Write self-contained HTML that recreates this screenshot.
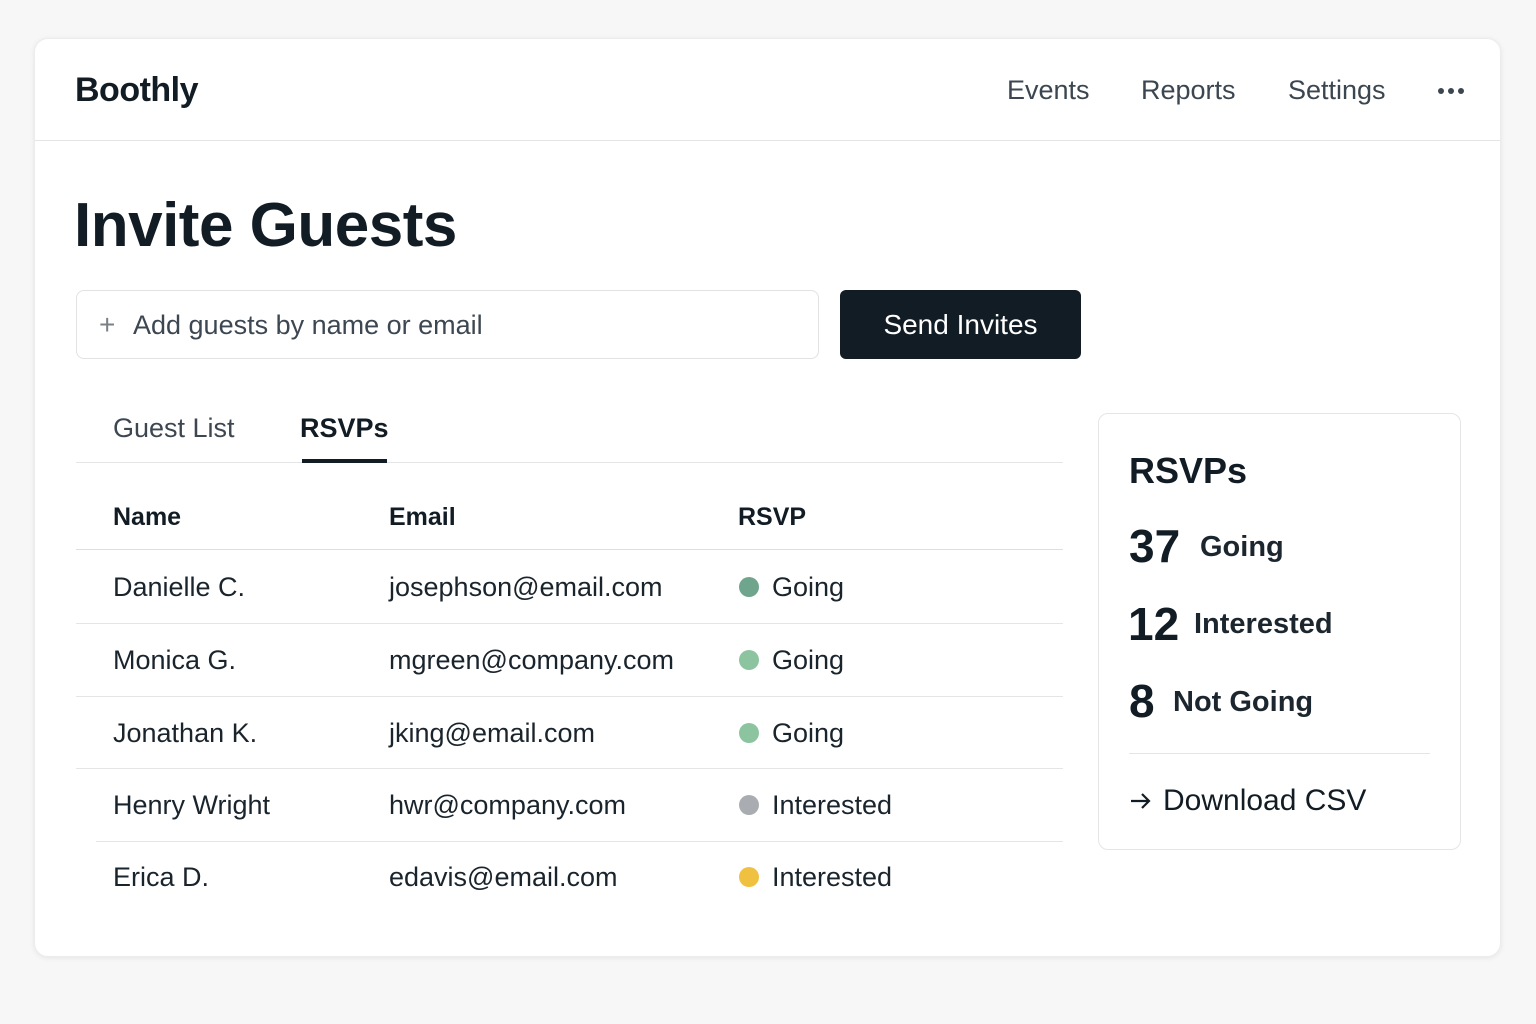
<!DOCTYPE html>
<html><head><meta charset="utf-8"><style>
*{margin:0;padding:0;box-sizing:border-box}
body{width:1536px;height:1024px;background:#f7f7f7;font-family:"Liberation Sans",sans-serif;color:#121c24;position:relative;overflow:hidden}
.card{position:absolute;left:34px;top:38px;width:1467px;height:919px;background:#fff;border-radius:14px;box-shadow:0 1px 6px rgba(0,0,0,.08);border:1px solid #ececec}
.a{position:absolute;white-space:nowrap}
.hr{position:absolute;height:1px;background:#e3e5e7}
.dot{position:absolute;width:20px;height:20px;border-radius:50%}
.t{font-size:27px;color:#1a242c}
.md{position:absolute;top:88px;width:6px;height:6px;border-radius:50%;background:#3b4650}
</style></head><body>
<div class="card"></div>
<div class="a" style="left:75px;top:71px;font-size:34px;font-weight:bold;letter-spacing:-0.5px">Boothly</div>
<div class="a" style="left:1007px;top:75px;font-size:27px;color:#3b4650">Events</div>
<div class="a" style="left:1141px;top:75px;font-size:27px;color:#3b4650">Reports</div>
<div class="a" style="left:1288px;top:75px;font-size:27px;color:#3b4650">Settings</div>
<div class="md" style="left:1438px"></div><div class="md" style="left:1448px"></div><div class="md" style="left:1458px"></div>
<div class="hr" style="left:35px;top:140px;width:1465px"></div>
<div class="a" style="left:74px;top:190px;font-size:62px;font-weight:bold;letter-spacing:-0.5px">Invite Guests</div>
<div class="a" style="left:76px;top:290px;width:743px;height:69px;border:1px solid #e0e2e4;border-radius:8px"></div>
<div class="a" style="left:99px;top:309px;font-size:28px;color:#7a8088">+</div>
<div class="a" style="left:133px;top:310px;font-size:27px;color:#3d4752">Add guests by name or email</div>
<div class="a" style="left:840px;top:290px;width:241px;height:69px;background:#111c24;border-radius:6px;color:#fff;font-size:28px;text-align:center;line-height:69px">Send Invites</div>
<div class="a" style="left:113px;top:413px;font-size:27px;color:#3d4752">Guest List</div>
<div class="a" style="left:300px;top:413px;font-size:27px;font-weight:bold">RSVPs</div>
<div class="hr" style="left:76px;top:462px;width:987px"></div>
<div class="a" style="left:302px;top:459px;width:85px;height:4px;background:#121c24"></div>
<div class="a" style="left:113px;top:503px;font-size:25px;font-weight:bold">Name</div>
<div class="a" style="left:389px;top:503px;font-size:25px;font-weight:bold">Email</div>
<div class="a" style="left:738px;top:503px;font-size:25px;font-weight:bold">RSVP</div>
<div class="hr" style="left:76px;top:549px;width:987px;background:#dcdfe2"></div>
<div class="a t" style="left:113px;top:572px">Danielle C.</div><div class="a t" style="left:389px;top:572px">josephson@email.com</div><div class="dot" style="left:739px;top:577px;background:#6fa58c"></div><div class="a t" style="left:772px;top:572px">Going</div>
<div class="hr" style="left:76px;top:623px;width:987px"></div>
<div class="a t" style="left:113px;top:645px">Monica G.</div><div class="a t" style="left:389px;top:645px">mgreen@company.com</div><div class="dot" style="left:739px;top:650px;background:#8cc4a0"></div><div class="a t" style="left:772px;top:645px">Going</div>
<div class="hr" style="left:76px;top:696px;width:987px"></div>
<div class="a t" style="left:113px;top:718px">Jonathan K.</div><div class="a t" style="left:389px;top:718px">jking@email.com</div><div class="dot" style="left:739px;top:723px;background:#8cc4a0"></div><div class="a t" style="left:772px;top:718px">Going</div>
<div class="hr" style="left:76px;top:768px;width:987px"></div>
<div class="a t" style="left:113px;top:790px">Henry Wright</div><div class="a t" style="left:389px;top:790px">hwr@company.com</div><div class="dot" style="left:739px;top:795px;background:#a9adb2"></div><div class="a t" style="left:772px;top:790px">Interested</div>
<div class="hr" style="left:96px;top:841px;width:967px"></div>
<div class="a t" style="left:113px;top:862px">Erica D.</div><div class="a t" style="left:389px;top:862px">edavis@email.com</div><div class="dot" style="left:739px;top:867px;background:#f0c040"></div><div class="a t" style="left:772px;top:862px">Interested</div>
<div class="a" style="left:1098px;top:413px;width:363px;height:437px;border:1px solid #e3e5e7;border-radius:10px"></div>
<div class="a" style="left:1129px;top:450px;font-size:36px;font-weight:bold">RSVPs</div>
<div class="a" style="left:1129px;top:519px;font-size:46px;font-weight:bold">37</div><div class="a" style="left:1200px;top:531px;font-size:29px;font-weight:bold;color:#1c262e">Going</div>
<div class="a" style="left:1128px;top:597px;font-size:46px;font-weight:bold">12</div><div class="a" style="left:1194px;top:608px;font-size:29px;font-weight:bold;color:#1c262e">Interested</div>
<div class="a" style="left:1129px;top:674px;font-size:46px;font-weight:bold">8</div><div class="a" style="left:1173px;top:686px;font-size:29px;font-weight:bold;color:#1c262e">Not Going</div>
<div class="hr" style="left:1129px;top:753px;width:301px"></div>
<svg class="a" style="left:1130px;top:791px" width="22" height="20" viewBox="0 0 22 20"><path d="M1 10H19M12 3L19 10L12 17" fill="none" stroke="#121c24" stroke-width="2.2"/></svg>
<div class="a" style="left:1163px;top:784px;font-size:30px">Download CSV</div>
</body></html>
